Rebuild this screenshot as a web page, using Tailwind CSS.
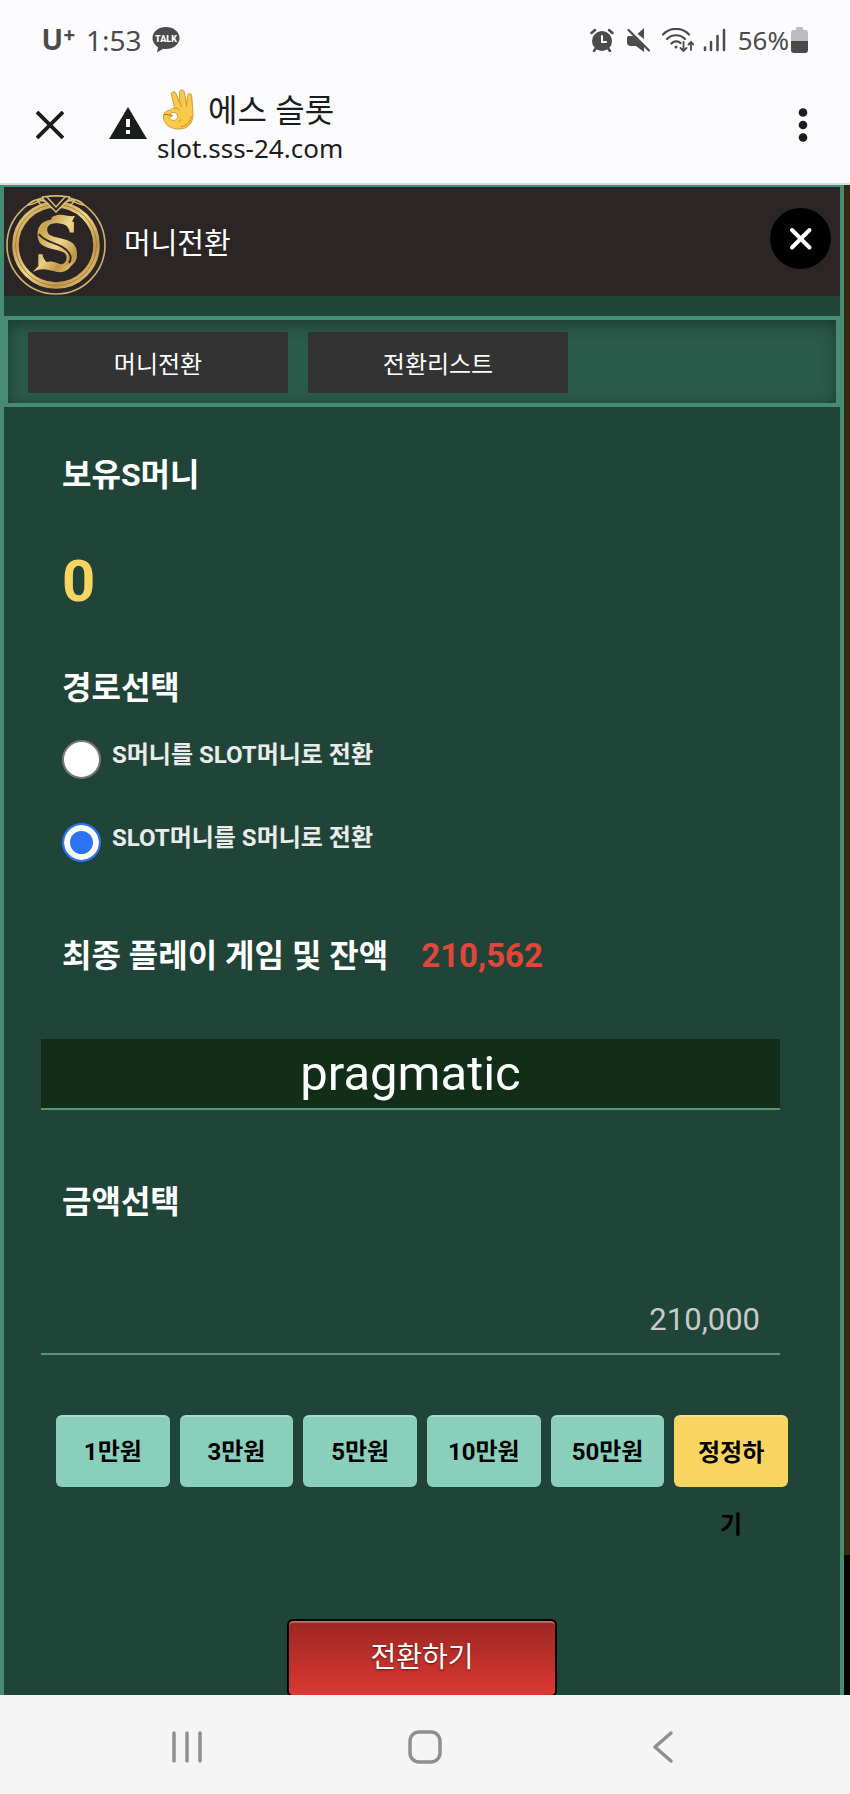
<!DOCTYPE html>
<html lang="ko">
<head>
    <meta charset="UTF-8">
    <meta name="viewport" content="width=device-width, initial-scale=1.0">
    <title>에스 슬롯 - 머니전환</title>
    <script src="https://cdn.jsdelivr.net/npm/@tailwindcss/browser@4"></script>
</head>
<body class="h-screen flex flex-col overflow-hidden bg-[#fcfcff] font-[Roboto,'Noto_Sans_CJK_KR',sans-serif]">
    <!-- Status bar -->
    <div class="h-20 shrink-0 flex items-center justify-between px-[42px] text-[#4b4b4b] font-['Noto_Sans','Noto_Sans_CJK_KR',sans-serif]">
        <div class="flex items-center gap-[10px]">
            <div class="flex items-start font-[Inter,sans-serif] font-bold leading-7"><span class="text-[28px]">U</span><span class="text-xl leading-4">+</span></div>
            <span class="text-[28px] leading-8">1:53</span>
            <svg class="w-7 h-7" viewBox="0 0 28 28" aria-label="TALK">
                <path d="M14 1C6.300 1 .5 5.800 .5 12c0 4 2.200 7.200 5.500 9.200L5 26.500 11 22.800c1 .2 2 .2 3 .2 7.500 0 13.500-4.800 13.500-11S21.500 1 14 1z" fill="#4b4b4b"/>
                <text x="14" y="15.500" text-anchor="middle" font-family="Roboto" font-weight="900" font-size="9" fill="#fff">TALK</text>
            </svg>
        </div>
        <div class="flex items-center">
            <svg class="w-6 h-6 mr-3" viewBox="0 0 24 24" fill="none" stroke="#4b4b4b" stroke-linecap="round">
                <circle cx="12" cy="13" r="10" fill="#4b4b4b" stroke="none"/>
                <path d="M1.500 5 5 2M22.500 5 19 2M4 23l2-3M20 23l-2-3" stroke-width="2.500"/>
                <path d="M12 8v6h4" stroke="#fff" stroke-width="2"/>
            </svg>
            <svg class="w-6 h-6 mr-3" viewBox="0 0 24 24" fill="#4b4b4b">
                <path d="M18 0v11L11.500 6z"/>
                <path d="M2.500 8H7l11 10v6l-8-6H4.500C2.500 18 1 16.500 1 15v-5c0-1 .5-2 1.500-2z"/>
                <path d="M5 2l19 19" stroke="#fcfcff" stroke-width="1.200"/>
                <path d="M2.500 2l20.500 20.500" stroke="#4b4b4b" stroke-width="2.200" stroke-linecap="round"/>
            </svg>
            <svg class="w-8 h-6 mr-2" viewBox="0 0 32 24" fill="none" stroke="#4b4b4b" stroke-width="2.200" stroke-linecap="round">
                <path d="M1 6.500C8-1 20-1 27 6.500M5 11c5-5 13-5 18 0M9.500 15.500c2-2.500 6.500-3 9-.5"/>
                <circle cx="14" cy="19" r="1.500" fill="#4b4b4b" stroke="none"/>
                <path d="M21.500 14v9m-3-3 3 3 3-3M29 22v-8m-2.500 2.500L29 14l2.500 2.500" stroke-width="1.800"/>
            </svg>
            <svg class="w-6 h-6 mr-3" viewBox="0 0 24 24" stroke="#4b4b4b" stroke-width="2.500" stroke-linecap="round">
                <path d="M3 19.500V22M9 14v8M15.500 8v14M22 2v20"/>
            </svg>
            <span class="text-[26px] leading-8">56%</span>
            <svg class="w-[17px] h-[26px] ml-[2px]" viewBox="0 0 17 26">
                <path d="M5 1.500Q5 0 6.500 0h4Q12 0 12 1.500V3h2.500Q17 3 17 6v8H0V6q0-3 2.500-3H5z" fill="#bdbdbf"/>
                <path d="M0 14h17v9q0 3-3 3H3q-3 0-3-3z" fill="#4b4b4b"/>
            </svg>
        </div>
    </div>

    <!-- Browser bar -->
    <header class="h-[105px] shrink-0 flex items-start border-b-2 border-[#cfdfdf] px-9 text-[#1b1c1e] font-['Noto_Sans','Noto_Sans_CJK_KR',sans-serif]">
        <button type="button" aria-label="닫기" class="mt-[31px]">
            <svg class="w-7 h-7" viewBox="0 0 28 28" stroke="#1b1c1e" stroke-width="3.800"><path d="M1 1l26 26M27 1 1 27"/></svg>
        </button>
        <svg class="w-[38px] h-8 mt-[27px] ml-[45px]" viewBox="0 0 38 32">
            <path d="M19 0l19 32H0z" fill="#1b1c1e"/>
            <path d="M17 12h4v8h-4zM17 23h4v4h-4z" fill="#fff"/>
        </svg>
        <div class="flex-1 ml-[10px]">
            <div class="h-[54px] flex items-end gap-[14px]">
                <svg class="w-[31px] h-[41px] ml-[6px] mb-1" viewBox="0 0 31 41">
                    <g stroke="#c48a2a" stroke-width=".8" fill="#fbc94a">
                        <path d="M23 21 24.500 6.500c.3-2.500 4-2.500 4.200 0L30 24c.5 9-4 15.500-13 16C7 40.500.5 35 .5 27.500c0-4 3-6.500 7.500-6l5 1z"/>
                        <path d="M17 20 16.500 3.500c0-3.500 4.500-3.500 5 0L24 19z"/>
                        <path d="M12 20.500 8.500 6c-1-3.500 3.300-4.500 4.500-1.500L19 19c1 4-2 6-4 5z"/>
                        <path d="M7 21.500c3-3.500 8-3 10.500 1 2.500 4 1 8.500-2 10.500"/>
                    </g>
                    <path d="M16.500 18.500c3-1 9-1 12.500 1V30H18z" fill="#fbc94a"/>
                    <path d="M1 25.500c3.500 0 6.500.3 9 1.500" stroke="#a36a18" stroke-width="1" fill="none"/>
                    <path d="M7 25.200c2-2.500 6-2.500 7.300.8 1 3-1 5.500-3.700 5.500-2.500 0-4-1.800-4-3.500l3-1.200z" fill="#fcfcff" stroke="#c48a2a" stroke-width=".8"/>
                    <path d="M28.500 27c-1 6-4 9.500-10.500 11" stroke="#e59f2f" stroke-width="1.500" fill="none"/>
                </svg>
                <span class="text-[32px] leading-[48px]">에스 슬롯</span>
            </div>
            <div class="text-[26px] leading-7">slot.sss-24.com</div>
        </div>
        <button type="button" aria-label="메뉴" class="mt-7">
            <svg class="w-5 h-[34px]" viewBox="0 0 20 34" fill="#1b1c1e"><circle cx="9" cy="4.500" r="4.300"/><circle cx="9" cy="17" r="4.300"/><circle cx="9" cy="29.500" r="4.300"/></svg>
        </button>
    </header>

    <!-- Page -->
    <main class="flex-1 min-h-0 flex overflow-hidden bg-black">
        <div class="flex-1 border-x-4 border-t-2 border-[#468c74] bg-[#204438] text-white">
            <!-- Title -->
            <div class="h-[109px] flex items-center bg-[#2b2525] pl-[2px] pr-[9px]">
                <svg class="w-[100px] h-[100px] mt-[6px]" viewBox="0 0 100 100" aria-label="S">
                    <defs>
                        <linearGradient id="gold" x1="0" y1="0" x2="1" y2="1">
                            <stop offset="0" stop-color="#f0dc98"/>
                            <stop offset=".25" stop-color="#c8a352"/>
                            <stop offset=".5" stop-color="#eed68c"/>
                            <stop offset=".75" stop-color="#c09645"/>
                            <stop offset="1" stop-color="#ecd48a"/>
                        </linearGradient>
                    </defs>
                    <g fill="none" stroke="#cdb26c">
                        <circle cx="50" cy="50" r="49" stroke-width="1.600"/>
                        <circle cx="50" cy="50" r="40.500" stroke="url(#gold)" stroke-width="6.500"/>
                        <circle cx="50" cy="50" r="40.500" stroke="#a8803a" stroke-width="1"/>
                    </g>
                    <path d="M37 2 50 17 63 2 57 1H43z" fill="#2b2525"/>
                    <g fill="none" stroke="#d9be75" stroke-width="1.500">
                        <path d="M36 3 50 17 64 3M41 2l9 10 9-10M36 2q14-2 28 0"/>
                        <path d="M40 7C33 3 30 10 22 10c5-6 13-7 18-3M60 7c7-4 10 3 18 3-5-6-13-7-18-3M31 5l5 6M69 5l-5 6"/>
                    </g>
                    <text x="51" y="73" text-anchor="middle" font-family="DejaVu Serif" font-weight="700" font-size="66" fill="url(#gold)">S</text>
                    <!-- ribbon ends and fold -->
                    <path d="M46 22c9-5 14 0 23-1l-5 9c-8 0-12-4-20-1zM27 77c7-9 15-13 24-9 7 3 12 3 16-2-2 8-8 12-16 11-9-2-15-5-24 0z" fill="url(#gold)"/>
                    <path d="M33 39c6 10 23 8 30 19 2 3 2 7 0 10" fill="none" stroke="#2b2525" stroke-width="1.800"/>
                </svg>
                <h1 class="flex-1 ml-[18px] mt-1 text-[29px] leading-10">머니전환</h1>
                <button type="button" aria-label="창 닫기" class="size-[61px] rounded-full bg-black flex items-center justify-center mb-[6px]">
                    <svg class="w-6 h-6" viewBox="0 0 24 24" stroke="#fff" stroke-width="4" stroke-linecap="round"><path d="M3 3l17.500 17.500M20.500 3 3 20.500"/></svg>
                </button>
            </div>

            <!-- Tabs -->
            <nav class="mt-5 border-4 border-[#468c74] bg-[#2a5a49] px-5 pt-3 pb-[10px] flex gap-5 shadow-[inset_0_4px_16px_rgba(0,0,0,0.35)]">
                <button type="button" class="w-[260px] h-[61px] pt-1 rounded-xs bg-[#333] text-2xl">머니전환</button>
                <button type="button" class="w-[260px] h-[61px] pt-1 rounded-xs bg-[#333] text-2xl">전환리스트</button>
            </nav>

            <!-- Transfer form -->
            <form>
                <div class="pl-[37px] pr-[52px]">
                    <h2 class="mt-11 pl-[21px] text-[32px] leading-[48px] font-bold">보유S머니</h2>
                    <p class="mt-[50px] pl-[21px] text-[58px] leading-[64px] font-bold text-[#f7d560]">0</p>

                    <fieldset class="mt-[51px] pl-[21px]">
                        <legend class="text-[32px] leading-[48px] font-bold">경로선택</legend>
                        <div class="mt-7 flex items-start gap-[11px]">
                            <input id="to-slot" type="radio" name="route" class="appearance-none size-[39px] rounded-full border-2 border-[#767676] bg-white checked:border-[#2f73f5] checked:bg-[#2f73f5] checked:shadow-[inset_0_0_0_6px_white]">
                            <label for="to-slot" class="text-2xl leading-[30px] font-bold text-[#e9eceb]">S머니를 SLOT머니로 전환</label>
                        </div>
                        <div class="mt-11 flex items-start gap-[11px]">
                            <input id="to-s" type="radio" name="route" checked class="appearance-none size-[39px] rounded-full border-2 border-[#767676] bg-white checked:border-[#2f73f5] checked:bg-[#2f73f5] checked:shadow-[inset_0_0_0_6px_white]">
                            <label for="to-s" class="text-2xl leading-[30px] font-bold text-[#e9eceb]">SLOT머니를 S머니로 전환</label>
                        </div>
                    </fieldset>

                    <div class="mt-[70px] pl-[21px] flex gap-[33px] text-[32px] leading-[48px] font-bold">
                        <label for="last-game">최종 플레이 게임 및 잔액</label>
                        <span class="text-[33px] text-[#e2453a]">210,562</span>
                    </div>
                    <div class="mt-[59px] mr-2">
                        <input id="last-game" type="text" readonly value="pragmatic" class="block w-full h-[71px] border-b-2 border-[#5a9480] bg-[#122e19] text-center text-[49px]">
                    </div>

                    <label for="amount" class="block mt-[68px] pl-[21px] text-[32px] leading-[48px] font-bold">금액선택</label>
                    <div class="mt-[59px] mr-2">
                        <input id="amount" type="text" value="210,000" class="block w-full h-[70px] border-b-2 border-[#5a9480] px-5 text-right text-[31px] text-[#c8cbca]">
                    </div>

                    <div class="mt-[60px] ml-[15px] grid grid-cols-6 gap-[10px] text-2xl font-bold text-black text-shadow-[0_0_2px_rgba(0,0,0,0.6)]">
                        <button type="button" class="h-[72px] rounded-md border-t-2 border-[#a5dccb] bg-[#8acfbb] leading-[68px]">1만원</button>
                        <button type="button" class="h-[72px] rounded-md border-t-2 border-[#a5dccb] bg-[#8acfbb] leading-[68px]">3만원</button>
                        <button type="button" class="h-[72px] rounded-md border-t-2 border-[#a5dccb] bg-[#8acfbb] leading-[68px]">5만원</button>
                        <button type="button" class="h-[72px] rounded-md border-t-2 border-[#a5dccb] bg-[#8acfbb] leading-[68px]">10만원</button>
                        <button type="button" class="h-[72px] rounded-md border-t-2 border-[#a5dccb] bg-[#8acfbb] leading-[68px]">50만원</button>
                        <button type="button" class="h-[72px] rounded-md border-t-2 border-[#f9df84] bg-[#f7d560] px-4 flex items-start justify-center leading-[72px] break-all">정정하기</button>
                    </div>
                </div>

                <button type="submit" class="block mx-auto mt-[132px] w-[270px] h-[78px] rounded-md border-2 border-black bg-linear-to-b from-[#9c2622] to-[#dc3832] text-[28px] shadow-[inset_0_2px_0_rgba(255,255,255,0.3)] text-shadow-[0_1px_2px_rgba(0,0,0,0.5)]">전환하기</button>
            </form>
        </div>
        <div class="w-[6px] mb-[140px] bg-[#38270f]"></div>
    </main>

    <!-- Navigation bar -->
    <footer class="h-[99px] shrink-0 bg-[#f5f5f5] flex items-center justify-center gap-[204px] pt-1">
        <button type="button" aria-label="최근 앱"><svg class="w-[34px] h-[34px]" viewBox="0 0 34 34" stroke="#8f8f8f" stroke-width="3.500" stroke-linecap="round"><path d="M4 3v28M17 3v28M30 3v28"/></svg></button>
        <button type="button" aria-label="홈"><svg class="w-[34px] h-[34px]" viewBox="0 0 34 34" fill="none" stroke="#8f8f8f" stroke-width="3.500"><rect x="2" y="2" width="30" height="30" rx="9"/></svg></button>
        <button type="button" aria-label="뒤로"><svg class="w-[34px] h-[34px]" viewBox="0 0 34 34" fill="none" stroke="#8f8f8f" stroke-width="3.500" stroke-linecap="round" stroke-linejoin="round"><path d="M25 3 9 17l16 14"/></svg></button>
    </footer>
</body>
</html>
